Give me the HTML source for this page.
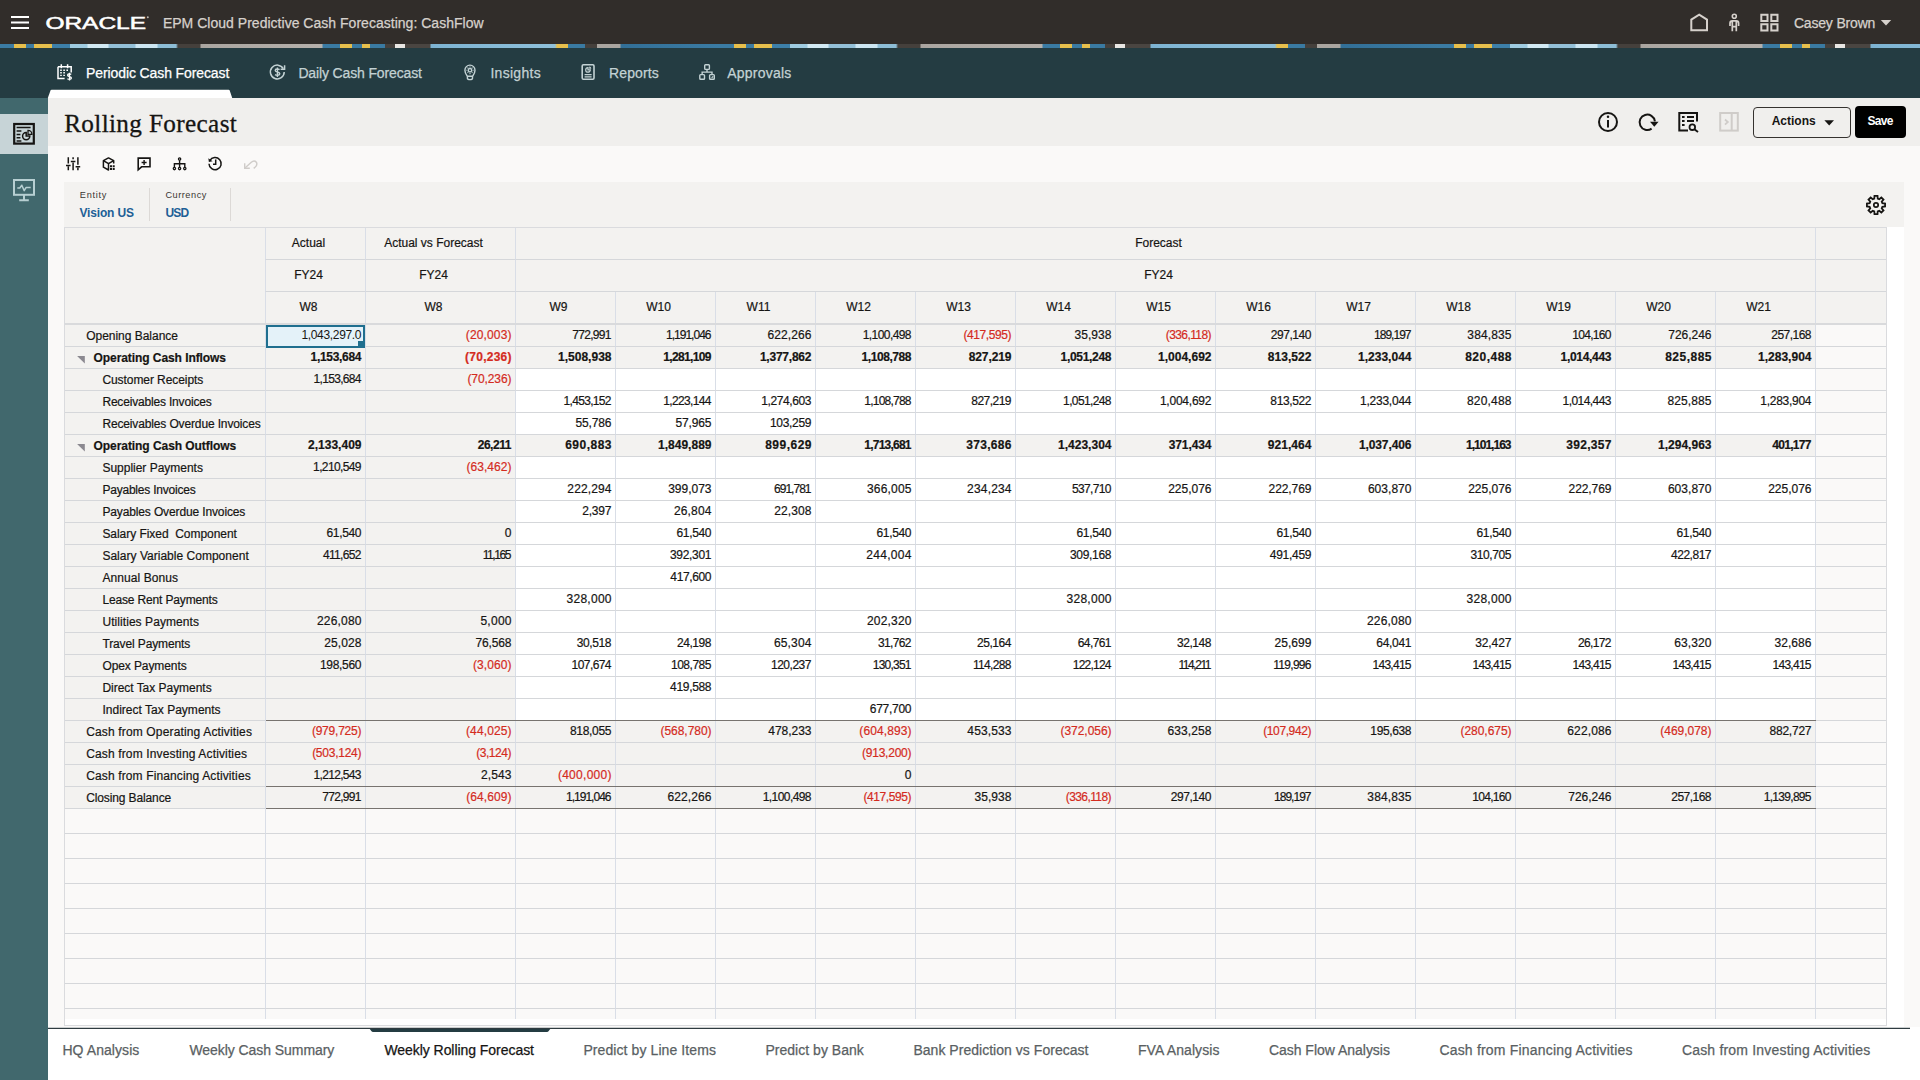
<!DOCTYPE html>
<html lang="en"><head><meta charset="utf-8"><title>Rolling Forecast</title>
<style>
*{box-sizing:border-box;margin:0;padding:0}
html,body{width:1920px;height:1080px;overflow:hidden;background:#faf9f8;font-family:"Liberation Sans", sans-serif;color:#161513}
.abs,.abs>*{position:absolute}
#hdr{left:0;top:0;width:1920px;height:44px;background:#312d2a}
#strip{left:0;top:44px;width:1920px;height:4px;background:repeating-linear-gradient(90deg,#3b7ba3 0,#3b7ba3 14px,#e6be4c 14px,#e6be4c 26px,#3b7ba3 26px,#3b7ba3 34px,#e6be4c 34px,#e6be4c 52px,#3d7fa8 52px,#3d7fa8 70px,#9fcbe0 70px,#9fcbe0 87px,#d2e9f3 88px,#d2e9f3 108px,#93bfd7 109px,#93bfd7 135px,#cde6f2 136px,#cde6f2 157px,#8dbdd6 158px,#8dbdd6 176px,#45403c 178px,#45403c 200px,#aaa5a0 201px,#b5b0ab 322px,#3a7aa2 323px,#3a7aa2 340px,#e6be4c 340px,#e6be4c 352px,#3a7aa2 352px,#3a7aa2 362px,#e6be4c 362px,#e6be4c 370px,#3a7aa2 370px,#3a7aa2 385px,#45403c 385px,#45403c 395px,#e8e6e3 395px,#e8e6e3 405px,#4a4541 405px,#4a4541 430px,#7db3d2 431px,#8fc0da 555px,#e6be4c 557px,#e6be4c 568px,#3a7aa2 568px,#3a7aa2 585px,#45403c 585px,#45403c 597px,#aaa5a0 597px,#aaa5a0 620px,#326f97 621px,#3b7ba3 720px)}
#nav{left:0;top:48px;width:1920px;height:50px;background:#243c42}
#side{left:0;top:98px;width:48px;height:982px;background:#41686d}
#sideact{left:0;top:16px;width:48px;height:40px;background:#c7d4d7}
#title{left:48px;top:98px;width:1872px;height:48px;background:#f0efed}
#pov{left:64px;top:182px;width:1840px;height:45px;background:#f3f2f0}
#gut{left:1887px;top:227px;width:17px;height:800px;background:#fff}
#grid{left:64px;top:227px;width:1823px;height:799px;border:1px solid #dadbde;background:#fff;overflow:hidden}
#btm{left:48px;top:1027px;width:1872px;height:53px;background:#fff}
#btmline{left:48px;top:1027px;width:1862px;height:2px;background:linear-gradient(#2e3b4040 50%,#2e3b40 50%)}
.r{left:0;width:1821px;height:22px}
.r>div{position:absolute;top:0;height:22px;border-right:1px solid #d9dee7;border-bottom:1px solid #d5d7da;font-size:12px;line-height:21px;white-space:pre;overflow:hidden;-webkit-text-stroke:.2px}
.h>div{background:#f3f2f0;text-align:center;padding-right:14px}
.g{background:#f3f2f0}
.e{background:#faf9f8}
.r>div:last-child{border-right:0}
.l{background:#f3f2f0;padding-top:1px}
.n{text-align:right;letter-spacing:var(--l);padding-right:calc(3.5px - var(--l))}
.b{font-weight:700}
.neg{color:#d42b1e}

#tools{left:0;top:0;width:1920px;height:0}
svg{overflow:visible}
</style></head>
<body>
<header class="abs" id="hdr"><svg style="left:8px;top:10px" width="26" height="26" viewBox="8 10 26 26" fill="none" ><path d="M11 17H29M11 22.5H29M11 28H29" stroke="#fff" stroke-width="2"/></svg><svg style="left:44px;top:12px" width="110" height="22" viewBox="44 12 110 22"><text x="45.400" y="28.500" font-family="Liberation Sans, sans-serif" font-size="17.400" fill="#fff" stroke="#fff" stroke-width=".550" textLength="100.600" lengthAdjust="spacingAndGlyphs">ORACLE</text><circle cx="147.800" cy="17.300" r="1" fill="#bbb6b1"/></svg><span style="left:162.9px;top:15.9px;font-size:14px;line-height:1;white-space:pre;letter-spacing:0.02px;color:#d6d1cc;-webkit-text-stroke:.25px;">EPM Cloud Predictive Cash Forecasting: CashFlow</span><svg style="left:1686px;top:10px" width="26" height="26" viewBox="1686 10 26 26" fill="none" ><path d="M1691.3 30.3V19.6L1699.2 14.6L1707 19.6V30.3Z" stroke="#d6d1cc" stroke-width="2" stroke-linejoin="miter"/></svg><svg style="left:1724px;top:10px" width="22" height="26" viewBox="1724 10 22 26" fill="none" ><circle cx="1734.3" cy="16.3" r="2" stroke="#d6d1cc" stroke-width="1.6"/><path d="M1730 26V23.2C1730 21.8 1731 20.8 1732.4 20.8H1736.2C1737.6 20.8 1738.6 21.8 1738.6 23.2V26M1732.3 21V31.3M1736.3 21V31.3M1732.3 26.6H1736.3" stroke="#d6d1cc" stroke-width="1.7"/></svg><svg style="left:1756px;top:10px" width="26" height="26" viewBox="1756 10 26 26" fill="none" ><path d="M1761.3 14.8h6.2v6.2h-6.2zM1771.3 14.8h6.2v6.2h-6.2zM1761.3 24.3h6.2v6.2h-6.2zM1771.3 24.3h6.2v6.2h-6.2z" stroke="#d6d1cc" stroke-width="2"/></svg><span style="left:1793.9px;top:15.9px;font-size:14px;line-height:1;white-space:pre;letter-spacing:-0.18px;color:#d6d1cc;-webkit-text-stroke:.25px;">Casey Brown</span><svg style="left:1878px;top:16px" width="16" height="12" viewBox="1878 16 16 12" fill="none" ><path d="M1880.8 20H1891.2L1886 25.4Z" fill="#d6d1cc"/></svg></header>
<div class="abs" id="strip"></div>
<nav class="abs" id="nav"><svg style="left:47px;top:41px" width="186" height="9" viewBox="0 0 186 9"><path d="M.8 9L3.500 1.500Q3.800 .800 4.600 .800H181.600Q182.400 .800 182.700 1.500L185.200 9Z" fill="#fff"/></svg><svg style="left:55px;top:14px" width="20" height="20" viewBox="55 62 20 20" fill="none" ><path d="M58 66.7H71.2V72.6M58 66.7V78.5H64.6M61.3 64.3V68.2M67.6 64.3V68.2" stroke="#fff" stroke-width="1.5"/><path d="M60.2 70.2h1.6M63.3 70.2h1.6M66.4 70.2h1.6M60.2 72.8h1.6M63.3 72.8h1.6M60.2 75.4h1.6M63.3 75.4h1.6" stroke="#fff" stroke-width="1.4"/><path d="M71.3 74.4C69.9 73.6 67.6 73.7 67.6 75.2C67.6 76.9 71.4 76.2 71.4 78C71.4 79.6 68.8 79.6 67.4 78.7M69.5 72.8V80.4" stroke="#fff" stroke-width="1.3"/></svg><span style="left:86.1px;top:17.9px;font-size:14px;line-height:1;white-space:pre;letter-spacing:-0.11px;color:#fff;-webkit-text-stroke:.25px;">Periodic Cash Forecast</span><svg style="left:266px;top:13px" width="22" height="22" viewBox="266 61 22 22" fill="none" ><path d="M283.3 68.6A6.9 6.9 0 1 0 284.2 72" stroke="#c3d2d4" stroke-width="1.5"/><path d="M284.6 65.2V69.2H280.6" stroke="#c3d2d4" stroke-width="1.5"/><path d="M279.6 69.6C278.4 68.8 275.2 68.7 275.2 70.4C275.2 72.4 279.8 71.6 279.8 73.7C279.8 75.6 276.4 75.5 275 74.6M277.4 67.5V76.9" stroke="#c3d2d4" stroke-width="1.4"/></svg><span style="left:298.4px;top:17.9px;font-size:14px;line-height:1;white-space:pre;letter-spacing:-0.14px;color:#c3d2d4;-webkit-text-stroke:.25px;">Daily Cash Forecast</span><svg style="left:461px;top:13px" width="18" height="22" viewBox="461 61 18 22" fill="none" ><path d="M467.3 76.3C466 74.6 464.9 73 464.9 70.2A5 5 0 0 1 475 70.2C475 73 473.9 74.6 472.6 76.3ZM467.4 76.4V78.2Q467.4 79.6 470 79.6Q472.5 79.6 472.5 78.200V76.4" stroke="#c3d2d4" stroke-width="1.4"/><circle cx="470" cy="70.2" r="1.7" stroke="#c3d2d4" stroke-width="1.3"/><path d="M470 67.6V66.600M470 72.8V74.2M467.4 70.2H466.4M472.6 70.2H473.6M468.2 68.4L467.5 67.7M471.8 68.4L472.5 67.7M468.2 72L467.500 72.700M471.8 72L472.5 72.7" stroke="#c3d2d4" stroke-width="1.1"/></svg><span style="left:490.4px;top:17.9px;font-size:14px;line-height:1;white-space:pre;letter-spacing:0.29px;color:#c3d2d4;-webkit-text-stroke:.25px;">Insights</span><svg style="left:578px;top:13px" width="20" height="22" viewBox="578 61 20 22" fill="none" ><rect x="582.2" y="64.8" width="11.8" height="14.4" rx="1.2" stroke="#c3d2d4" stroke-width="1.6"/><path d="M584.6 74.6H591.600M584.6 76.900H591.6" stroke="#c3d2d4" stroke-width="1.3"/><path d="M588 67.6A2.300 2.300 0 1 0 590.3 69.9H588Z" stroke="#c3d2d4" stroke-width="1.2"/><path d="M589.200 66.6V68.700H591.3A2.100 2.100 0 0 0 589.200 66.600Z" fill="#c3d2d4"/></svg><span style="left:609.1px;top:17.9px;font-size:14px;line-height:1;white-space:pre;letter-spacing:0.09px;color:#c3d2d4;-webkit-text-stroke:.25px;">Reports</span><svg style="left:696px;top:13px" width="22" height="22" viewBox="696 61 22 22" fill="none" ><rect x="704.700" y="64.700" width="4.700" height="4.700" rx=".8" stroke="#c3d2d4" stroke-width="1.4"/><rect x="699.800" y="74.600" width="4.700" height="4.700" rx=".8" stroke="#c3d2d4" stroke-width="1.4"/><rect x="709.600" y="74.600" width="4.700" height="4.700" rx=".8" stroke="#c3d2d4" stroke-width="1.4"/><path d="M707 69.600V72.100M702.150 74.400V72.100H712V74.400" stroke="#c3d2d4" stroke-width="1.4"/><path d="M711.400 77.400H712.800V76" stroke="#c3d2d4" stroke-width="1"/></svg><span style="left:727.2px;top:17.9px;font-size:14px;line-height:1;white-space:pre;letter-spacing:0.24px;color:#c3d2d4;-webkit-text-stroke:.25px;">Approvals</span></nav>
<aside class="abs" id="side"><div id="sideact"></div><svg style="left:10px;top:21px" width="28" height="30" viewBox="10 119 28 30" fill="none" ><rect x="14.2" y="124" width="19.6" height="19.600" stroke="#161513" stroke-width="2.200"/><path d="M16.6 127.600H30.600M16.6 131H21.400M16.6 134.400H20.400M16.6 137.800H20.400M16.600 141H21.400" stroke="#161513" stroke-width="1.500"/><path d="M29.800 136.100A3.600 3.600 0 1 1 26.200 132.500V136.100Z" stroke="#161513" stroke-width="1.500"/><path d="M28 130.400V134.300H31.900A3.900 3.900 0 0 0 28 130.400Z" stroke="#161513" stroke-width="1.300"/></svg><svg style="left:10px;top:77px" width="28" height="30" viewBox="10 175 28 30" fill="none" ><rect x="14" y="180" width="20" height="14.800" stroke="#b7cfd2" stroke-width="2"/><path d="M24 194.800V200.300M19.200 200.300H28.800" stroke="#b7cfd2" stroke-width="2"/><path d="M17.300 188H19.800L21.800 185.200L24.200 190.600L26 187.600H30.700" stroke="#b7cfd2" stroke-width="1.500" stroke-linejoin="round"/></svg></aside>
<div class="abs" id="title"><span style="left:16.2px;top:12.5px;font-size:25.2px;line-height:1;white-space:pre;letter-spacing:0.36px;font-family:'Liberation Serif', serif;-webkit-text-stroke:.3px #161513;">Rolling Forecast</span><svg style="left:1548px;top:12px" width="24" height="24" viewBox="1596 110 24 24" fill="none" ><circle cx="1608" cy="122" r="9" stroke="#161513" stroke-width="2"/><path d="M1608 120V127.400" stroke="#161513" stroke-width="2"/><circle cx="1608" cy="116.700" r="1.250" fill="#161513"/></svg><svg style="left:1587px;top:12px" width="26" height="24" viewBox="1635 110 26 24" fill="none" ><path d="M1654.900 121.300A7.700 7.700 0 1 0 1651.600 128.700" stroke="#161513" stroke-width="2"/><path d="M1650 121.800L1654.300 126.800L1658.600 121.800Z" fill="#161513"/></svg><svg style="left:1628px;top:12px" width="24" height="24" viewBox="1676 110 24 24" fill="none" ><path d="M1697 121.500V113.100H1679.300V130.500H1688" stroke="#161513" stroke-width="2"/><path d="M1682 117H1684.600M1682 121H1684.600M1682 124.900H1684.600" stroke="#161513" stroke-width="2"/><path d="M1687 117H1694M1687 121H1694" stroke="#161513" stroke-width="2"/><circle cx="1692.300" cy="127.200" r="2.800" stroke="#161513" stroke-width="1.800"/><path d="M1694.400 129.300L1698 132" stroke="#161513" stroke-width="2"/></svg><svg style="left:1669px;top:12px" width="24" height="24" viewBox="1717 110 24 24" fill="none" ><rect x="1720.200" y="113" width="17.600" height="17.600" stroke="#cfccc9" stroke-width="2"/><path d="M1731.700 113V130.600" stroke="#cfccc9" stroke-width="2"/><path d="M1725 119.500L1727.800 122L1725 124.600" stroke="#cfccc9" stroke-width="1.800"/></svg><div style="left:1705px;top:9px;width:98px;height:31px;border:1px solid #35322f;border-radius:4px;background:#f0efed"></div><span style="left:1723.7px;top:16.8px;font-size:12px;line-height:1;white-space:pre;letter-spacing:-0.0px;font-weight:700;">Actions</span><svg style="left:1774px;top:19px" width="14" height="12" viewBox="1822 117 14 12" fill="none" ><path d="M1824.400 120.200H1834L1829.200 125.600Z" fill="#161513"/></svg><div style="left:1807px;top:8px;width:51px;height:32px;border-radius:4px;background:#000"></div><span style="left:1819.4px;top:16.8px;font-size:12px;line-height:1;white-space:pre;letter-spacing:-0.68px;font-weight:700;color:#fff;">Save</span></div>
<div class="abs" id="tools"><svg style="left:64px;top:154px" width="18" height="20" viewBox="64 154 18 20" fill="none" ><path d="M68.300 157.300V163.400M68.300 166.300V170.300M73.100 157.300V159.300M73.100 162.600V170.300M77.900 157.300V164.700M77.900 167.600V170.300" stroke="#161513" stroke-width="1.500"/><path d="M66 165.500H70.600M70.800 161.400H75.400M75.600 166.700H80.200" stroke="#161513" stroke-width="1.500"/></svg><svg style="left:100px;top:154px" width="18" height="20" viewBox="100 154 18 20" fill="none" ><path d="M113.700 163.600V160.700L108.500 157.900L103.400 160.700V167.200L108.500 170V163.600L113.700 160.700M103.400 160.700L108.500 163.600" stroke="#161513" stroke-width="1.500" stroke-linejoin="round"/><path d="M110 165.300h2v2h-2zM112.700 165.300h2v2h-2zM110 168h2v2h-2zM112.700 168h2v2h-2z" fill="#161513"/></svg><svg style="left:135px;top:154px" width="18" height="20" viewBox="135 154 18 20" fill="none" ><path d="M138.200 158.100H150V166.800H141.600L138.200 169.800Z" stroke="#161513" stroke-width="1.600"/><path d="M144.100 160V165M141.600 162.500H146.600" stroke="#161513" stroke-width="1.400"/></svg><svg style="left:171px;top:154px" width="18" height="20" viewBox="171 154 18 20" fill="none" ><circle cx="179.600" cy="159.100" r="1.150" stroke="#161513" stroke-width="1.300"/><circle cx="174.400" cy="168.600" r="1.150" stroke="#161513" stroke-width="1.300"/><circle cx="179.600" cy="168.600" r="1.150" stroke="#161513" stroke-width="1.300"/><circle cx="184.800" cy="168.600" r="1.150" stroke="#161513" stroke-width="1.300"/><path d="M179.600 160.500V167.200M174.400 167.200V163.800H184.800V167.200" stroke="#161513" stroke-width="1.400"/></svg><svg style="left:206px;top:154px" width="20" height="20" viewBox="206 154 20 20" fill="none" ><path d="M209.800 160.600A6.100 6.100 0 1 1 209 163.800" stroke="#161513" stroke-width="1.500"/><path d="M208.300 158.200L208.900 162.100L212.600 161.200Z" fill="#161513"/><path d="M215.700 159.600V164.200H213" stroke="#161513" stroke-width="1.500"/></svg><svg style="left:241px;top:154px" width="20" height="20" viewBox="241 154 20 20" fill="none" ><path d="M245 168L251.300 162.300Q254.300 159.700 256.300 162.200Q257.900 164.600 255 167.300L253.700 168.400" stroke="#cfccc9" stroke-width="1.400"/><path d="M244.700 163.300V168.300H249.800" stroke="#cfccc9" stroke-width="1.400"/></svg></div>
<div class="abs" id="pov"><span style="left:15.8px;top:9.1px;font-size:9.2px;line-height:1;white-space:pre;letter-spacing:0.72px;color:#3a3632;">Entity</span><span style="left:15.4px;top:24.8px;font-size:12px;line-height:1;white-space:pre;letter-spacing:-0.16px;font-weight:700;color:#1d5f96;">Vision US</span><span style="left:101.4px;top:9.1px;font-size:9.2px;line-height:1;white-space:pre;letter-spacing:0.53px;color:#3a3632;">Currency</span><span style="left:101.4px;top:24.8px;font-size:12px;line-height:1;white-space:pre;letter-spacing:-0.82px;font-weight:700;color:#1d5f96;">USD</span><div style="left:85px;top:6px;width:1px;height:33px;background:#dcd9d6"></div><div style="left:166px;top:6px;width:1px;height:33px;background:#dcd9d6"></div><svg style="left:1800px;top:11px" width="24" height="24" viewBox="1864 193 24 24" fill="none" ><path d="M1874.26 198.63L1874.49 195.92L1877.51 195.92L1877.74 198.63L1879.27 199.27L1881.35 197.51L1883.49 199.65L1881.73 201.73L1882.37 203.26L1885.08 203.49L1885.08 206.51L1882.37 206.74L1881.73 208.27L1883.49 210.35L1881.35 212.49L1879.27 210.73L1877.74 211.37L1877.51 214.08L1874.49 214.08L1874.26 211.37L1872.73 210.73L1870.65 212.49L1868.51 210.35L1870.27 208.27L1869.63 206.74L1866.92 206.51L1866.92 203.49L1869.63 203.26L1870.27 201.73L1868.51 199.65L1870.65 197.51L1872.73 199.27Z" stroke="#161513" stroke-width="1.800" stroke-linejoin="miter"/><circle cx="1876" cy="205" r="2.200" stroke="#161513" stroke-width="1.700"/></svg></div>
<div class="abs" id="gut"></div>
<main class="abs" id="grid">
<div class="r h" style="top:0px;height:32px"><div style="left:0px;width:201px;height:32px;line-height:30px"></div><div style="left:201px;width:100px;height:32px;line-height:30px">Actual</div><div style="left:301px;width:150px;height:32px;line-height:30px">Actual vs Forecast</div><div style="left:451px;width:1300px;height:32px;line-height:30px">Forecast</div><div style="left:1751px;width:70px;height:32px;line-height:30px"></div></div>
<div class="r h" style="top:32px;height:32px"><div style="left:0px;width:201px;height:32px;line-height:30px"></div><div style="left:201px;width:100px;height:32px;line-height:30px">FY24</div><div style="left:301px;width:150px;height:32px;line-height:30px">FY24</div><div style="left:451px;width:1300px;height:32px;line-height:30px">FY24</div><div style="left:1751px;width:70px;height:32px;line-height:30px"></div></div>
<div class="r h" style="top:64px;height:33px"><div style="left:0px;width:201px;height:33px;line-height:31px"></div><div style="left:201px;width:100px;height:33px;line-height:31px">W8</div><div style="left:301px;width:150px;height:33px;line-height:31px">W8</div><div style="left:451px;width:100px;height:33px;line-height:31px">W9</div><div style="left:551px;width:100px;height:33px;line-height:31px">W10</div><div style="left:651px;width:100px;height:33px;line-height:31px">W11</div><div style="left:751px;width:100px;height:33px;line-height:31px">W12</div><div style="left:851px;width:100px;height:33px;line-height:31px">W13</div><div style="left:951px;width:100px;height:33px;line-height:31px">W14</div><div style="left:1051px;width:100px;height:33px;line-height:31px">W15</div><div style="left:1151px;width:100px;height:33px;line-height:31px">W16</div><div style="left:1251px;width:100px;height:33px;line-height:31px">W17</div><div style="left:1351px;width:100px;height:33px;line-height:31px">W18</div><div style="left:1451px;width:100px;height:33px;line-height:31px">W19</div><div style="left:1551px;width:100px;height:33px;line-height:31px">W20</div><div style="left:1651px;width:100px;height:33px;line-height:31px">W21</div><div style="left:1751px;width:70px;height:33px;line-height:31px"></div></div>
<div style="left:0;top:95px;width:1821px;height:2px;background:#d9dadc"></div>
<div style="left:0;top:0;width:200px;height:95px;background:#f3f2f0"></div>
<div class="r" style="top:97px"><div class="l" style="left:0px;width:201px;padding-left:21.2px;letter-spacing:-0.02px">Opening Balance</div><div class="n g" style="left:201px;width:100px;"></div><div class="n g neg" style="left:301px;width:150px;--l:0.15px">(20,003)</div><div class="n g" style="left:451px;width:100px;--l:-0.68px">772,991</div><div class="n g" style="left:551px;width:100px;--l:-0.98px">1,191,046</div><div class="n g" style="left:651px;width:100px;--l:0.09px">622,266</div><div class="n g" style="left:751px;width:100px;--l:-0.58px">1,100,498</div><div class="n g neg" style="left:851px;width:100px;--l:-0.42px">(417,595)</div><div class="n g" style="left:951px;width:100px;--l:0.07px">35,938</div><div class="n g neg" style="left:1051px;width:100px;--l:-0.59px">(336,118)</div><div class="n g" style="left:1151px;width:100px;--l:-0.43px">297,140</div><div class="n g" style="left:1251px;width:100px;--l:-0.98px">189,197</div><div class="n g" style="left:1351px;width:100px;--l:0.13px">384,835</div><div class="n g" style="left:1451px;width:100px;--l:-0.67px">104,160</div><div class="n g" style="left:1551px;width:100px;--l:-0.03px">726,246</div><div class="n g" style="left:1651px;width:100px;--l:-0.53px">257,168</div><div class="e" style="left:1751px;width:70px;"></div></div>
<div class="r" style="top:119px"><div class="l b" style="left:0px;width:201px;padding-left:28.5px;letter-spacing:-0.07px">Operating Cash Inflows</div><div class="n g b" style="left:201px;width:100px;--l:-0.31px">1,153,684</div><div class="n g b neg" style="left:301px;width:150px;--l:0.25px">(70,236)</div><div class="n g b" style="left:451px;width:100px;--l:0.02px">1,508,938</div><div class="n g b" style="left:551px;width:100px;--l:-0.64px">1,281,109</div><div class="n g b" style="left:651px;width:100px;--l:-0.22px">1,377,862</div><div class="n g b" style="left:751px;width:100px;--l:-0.43px">1,108,788</div><div class="n g b" style="left:851px;width:100px;--l:-0.1px">827,219</div><div class="n g b" style="left:951px;width:100px;--l:-0.31px">1,051,248</div><div class="n g b" style="left:1051px;width:100px;--l:0.02px">1,004,692</div><div class="n g b" style="left:1151px;width:100px;--l:0.06px">813,522</div><div class="n g b" style="left:1251px;width:100px;--l:0.02px">1,233,044</div><div class="n g b" style="left:1351px;width:100px;--l:0.49px">820,488</div><div class="n g b" style="left:1451px;width:100px;--l:-0.31px">1,014,443</div><div class="n g b" style="left:1551px;width:100px;--l:0.49px">825,885</div><div class="n g b" style="left:1651px;width:100px;--l:0.02px">1,283,904</div><div class="e" style="left:1751px;width:70px;"></div></div>
<div class="r" style="top:141px"><div class="l" style="left:0px;width:201px;padding-left:37.4px;letter-spacing:-0.07px">Customer Receipts</div><div class="n g" style="left:201px;width:100px;--l:-0.67px">1,153,684</div><div class="n g neg" style="left:301px;width:150px;--l:-0.09px">(70,236)</div><div class="n" style="left:451px;width:100px;"></div><div class="n" style="left:551px;width:100px;"></div><div class="n" style="left:651px;width:100px;"></div><div class="n" style="left:751px;width:100px;"></div><div class="n" style="left:851px;width:100px;"></div><div class="n" style="left:951px;width:100px;"></div><div class="n" style="left:1051px;width:100px;"></div><div class="n" style="left:1151px;width:100px;"></div><div class="n" style="left:1251px;width:100px;"></div><div class="n" style="left:1351px;width:100px;"></div><div class="n" style="left:1451px;width:100px;"></div><div class="n" style="left:1551px;width:100px;"></div><div class="n" style="left:1651px;width:100px;"></div><div class="e" style="left:1751px;width:70px;"></div></div>
<div class="r" style="top:163px"><div class="l" style="left:0px;width:201px;padding-left:37.4px;letter-spacing:-0.18px">Receivables Invoices</div><div class="n g" style="left:201px;width:100px;"></div><div class="n g" style="left:301px;width:150px;"></div><div class="n" style="left:451px;width:100px;--l:-0.67px">1,453,152</div><div class="n" style="left:551px;width:100px;--l:-0.63px">1,223,144</div><div class="n" style="left:651px;width:100px;--l:-0.39px">1,274,603</div><div class="n" style="left:751px;width:100px;--l:-0.78px">1,108,788</div><div class="n" style="left:851px;width:100px;--l:-0.53px">827,219</div><div class="n" style="left:951px;width:100px;--l:-0.62px">1,051,248</div><div class="n" style="left:1051px;width:100px;--l:-0.22px">1,004,692</div><div class="n" style="left:1151px;width:100px;--l:-0.37px">813,522</div><div class="n" style="left:1251px;width:100px;--l:-0.23px">1,233,044</div><div class="n" style="left:1351px;width:100px;--l:0.19px">820,488</div><div class="n" style="left:1451px;width:100px;--l:-0.55px">1,014,443</div><div class="n" style="left:1551px;width:100px;--l:0.09px">825,885</div><div class="n" style="left:1651px;width:100px;--l:-0.27px">1,283,904</div><div class="e" style="left:1751px;width:70px;"></div></div>
<div class="r" style="top:185px"><div class="l" style="left:0px;width:201px;padding-left:37.4px;letter-spacing:-0.14px">Receivables Overdue Invoices</div><div class="n g" style="left:201px;width:100px;"></div><div class="n g" style="left:301px;width:150px;"></div><div class="n" style="left:451px;width:100px;--l:-0.12px">55,786</div><div class="n" style="left:551px;width:100px;--l:-0.12px">57,965</div><div class="n" style="left:651px;width:100px;--l:-0.31px">103,259</div><div class="n" style="left:751px;width:100px;"></div><div class="n" style="left:851px;width:100px;"></div><div class="n" style="left:951px;width:100px;"></div><div class="n" style="left:1051px;width:100px;"></div><div class="n" style="left:1151px;width:100px;"></div><div class="n" style="left:1251px;width:100px;"></div><div class="n" style="left:1351px;width:100px;"></div><div class="n" style="left:1451px;width:100px;"></div><div class="n" style="left:1551px;width:100px;"></div><div class="n" style="left:1651px;width:100px;"></div><div class="e" style="left:1751px;width:70px;"></div></div>
<div class="r" style="top:207px"><div class="l b" style="left:0px;width:201px;padding-left:28.5px;letter-spacing:-0.06px">Operating Cash Outflows</div><div class="n g b" style="left:201px;width:100px;--l:0.02px">2,133,409</div><div class="n g b" style="left:301px;width:150px;--l:-0.44px">26,211</div><div class="n g b" style="left:451px;width:100px;--l:0.49px">690,883</div><div class="n g b" style="left:551px;width:100px;--l:0.02px">1,849,889</div><div class="n g b" style="left:651px;width:100px;--l:0.49px">899,629</div><div class="n g b" style="left:751px;width:100px;--l:-0.77px">1,713,681</div><div class="n g b" style="left:851px;width:100px;--l:0.33px">373,686</div><div class="n g b" style="left:951px;width:100px;--l:0.02px">1,423,304</div><div class="n g b" style="left:1051px;width:100px;--l:-0.1px">371,434</div><div class="n g b" style="left:1151px;width:100px;--l:0.06px">921,464</div><div class="n g b" style="left:1251px;width:100px;--l:-0.1px">1,037,406</div><div class="n g b" style="left:1351px;width:100px;--l:-0.98px">1,101,163</div><div class="n g b" style="left:1451px;width:100px;--l:0.33px">392,357</div><div class="n g b" style="left:1551px;width:100px;--l:0.02px">1,294,963</div><div class="n g b" style="left:1651px;width:100px;--l:-0.68px">401,177</div><div class="e" style="left:1751px;width:70px;"></div></div>
<div class="r" style="top:229px"><div class="l" style="left:0px;width:201px;padding-left:37.4px;letter-spacing:-0.01px">Supplier Payments</div><div class="n g" style="left:201px;width:100px;--l:-0.62px">1,210,549</div><div class="n g neg" style="left:301px;width:150px;--l:0.04px">(63,462)</div><div class="n" style="left:451px;width:100px;"></div><div class="n" style="left:551px;width:100px;"></div><div class="n" style="left:651px;width:100px;"></div><div class="n" style="left:751px;width:100px;"></div><div class="n" style="left:851px;width:100px;"></div><div class="n" style="left:951px;width:100px;"></div><div class="n" style="left:1051px;width:100px;"></div><div class="n" style="left:1151px;width:100px;"></div><div class="n" style="left:1251px;width:100px;"></div><div class="n" style="left:1351px;width:100px;"></div><div class="n" style="left:1451px;width:100px;"></div><div class="n" style="left:1551px;width:100px;"></div><div class="n" style="left:1651px;width:100px;"></div><div class="e" style="left:1751px;width:70px;"></div></div>
<div class="r" style="top:251px"><div class="l" style="left:0px;width:201px;padding-left:37.4px;letter-spacing:-0.21px">Payables Invoices</div><div class="n g" style="left:201px;width:100px;"></div><div class="n g" style="left:301px;width:150px;"></div><div class="n" style="left:451px;width:100px;--l:0.13px">222,294</div><div class="n" style="left:551px;width:100px;--l:-0.01px">399,073</div><div class="n" style="left:651px;width:100px;--l:-0.98px">691,781</div><div class="n" style="left:751px;width:100px;--l:0.2px">366,005</div><div class="n" style="left:851px;width:100px;--l:0.17px">234,234</div><div class="n" style="left:951px;width:100px;--l:-0.63px">537,710</div><div class="n" style="left:1051px;width:100px;--l:-0.01px">225,076</div><div class="n" style="left:1151px;width:100px;--l:-0.07px">222,769</div><div class="n" style="left:1251px;width:100px;--l:0.04px">603,870</div><div class="n" style="left:1351px;width:100px;--l:-0.01px">225,076</div><div class="n" style="left:1451px;width:100px;--l:-0.07px">222,769</div><div class="n" style="left:1551px;width:100px;--l:0.04px">603,870</div><div class="n" style="left:1651px;width:100px;--l:-0.01px">225,076</div><div class="e" style="left:1751px;width:70px;"></div></div>
<div class="r" style="top:273px"><div class="l" style="left:0px;width:201px;padding-left:37.4px;letter-spacing:-0.13px">Payables Overdue Invoices</div><div class="n g" style="left:201px;width:100px;"></div><div class="n g" style="left:301px;width:150px;"></div><div class="n" style="left:451px;width:100px;--l:-0.19px">2,397</div><div class="n" style="left:551px;width:100px;--l:0.18px">26,804</div><div class="n" style="left:651px;width:100px;--l:0.13px">22,308</div><div class="n" style="left:751px;width:100px;"></div><div class="n" style="left:851px;width:100px;"></div><div class="n" style="left:951px;width:100px;"></div><div class="n" style="left:1051px;width:100px;"></div><div class="n" style="left:1151px;width:100px;"></div><div class="n" style="left:1251px;width:100px;"></div><div class="n" style="left:1351px;width:100px;"></div><div class="n" style="left:1451px;width:100px;"></div><div class="n" style="left:1551px;width:100px;"></div><div class="n" style="left:1651px;width:100px;"></div><div class="e" style="left:1751px;width:70px;"></div></div>
<div class="r" style="top:295px"><div class="l" style="left:0px;width:201px;padding-left:37.4px;letter-spacing:-0.04px">Salary Fixed  Component</div><div class="n g" style="left:201px;width:100px;--l:-0.35px">61,540</div><div class="n g" style="left:301px;width:150px;--l:0px">0</div><div class="n" style="left:451px;width:100px;"></div><div class="n" style="left:551px;width:100px;--l:-0.35px">61,540</div><div class="n" style="left:651px;width:100px;"></div><div class="n" style="left:751px;width:100px;--l:-0.35px">61,540</div><div class="n" style="left:851px;width:100px;"></div><div class="n" style="left:951px;width:100px;--l:-0.35px">61,540</div><div class="n" style="left:1051px;width:100px;"></div><div class="n" style="left:1151px;width:100px;--l:-0.35px">61,540</div><div class="n" style="left:1251px;width:100px;"></div><div class="n" style="left:1351px;width:100px;--l:-0.35px">61,540</div><div class="n" style="left:1451px;width:100px;"></div><div class="n" style="left:1551px;width:100px;--l:-0.35px">61,540</div><div class="n" style="left:1651px;width:100px;"></div><div class="e" style="left:1751px;width:70px;"></div></div>
<div class="r" style="top:317px"><div class="l" style="left:0px;width:201px;padding-left:37.4px;letter-spacing:0.02px">Salary Variable Component</div><div class="n g" style="left:201px;width:100px;--l:-0.66px">411,652</div><div class="n g" style="left:301px;width:150px;--l:-1.39px">11,165</div><div class="n" style="left:451px;width:100px;"></div><div class="n" style="left:551px;width:100px;--l:-0.31px">392,301</div><div class="n" style="left:651px;width:100px;"></div><div class="n" style="left:751px;width:100px;--l:0.33px">244,004</div><div class="n" style="left:851px;width:100px;"></div><div class="n" style="left:951px;width:100px;--l:-0.31px">309,168</div><div class="n" style="left:1051px;width:100px;"></div><div class="n" style="left:1151px;width:100px;--l:-0.28px">491,459</div><div class="n" style="left:1251px;width:100px;"></div><div class="n" style="left:1351px;width:100px;--l:-0.41px">310,705</div><div class="n" style="left:1451px;width:100px;"></div><div class="n" style="left:1551px;width:100px;--l:-0.48px">422,817</div><div class="n" style="left:1651px;width:100px;"></div><div class="e" style="left:1751px;width:70px;"></div></div>
<div class="r" style="top:339px"><div class="l" style="left:0px;width:201px;padding-left:37.4px;letter-spacing:0.08px">Annual Bonus</div><div class="n g" style="left:201px;width:100px;"></div><div class="n g" style="left:301px;width:150px;"></div><div class="n" style="left:451px;width:100px;"></div><div class="n" style="left:551px;width:100px;--l:-0.37px">417,600</div><div class="n" style="left:651px;width:100px;"></div><div class="n" style="left:751px;width:100px;"></div><div class="n" style="left:851px;width:100px;"></div><div class="n" style="left:951px;width:100px;"></div><div class="n" style="left:1051px;width:100px;"></div><div class="n" style="left:1151px;width:100px;"></div><div class="n" style="left:1251px;width:100px;"></div><div class="n" style="left:1351px;width:100px;"></div><div class="n" style="left:1451px;width:100px;"></div><div class="n" style="left:1551px;width:100px;"></div><div class="n" style="left:1651px;width:100px;"></div><div class="e" style="left:1751px;width:70px;"></div></div>
<div class="r" style="top:361px"><div class="l" style="left:0px;width:201px;padding-left:37.4px;letter-spacing:-0.15px">Lease Rent Payments</div><div class="n g" style="left:201px;width:100px;"></div><div class="n g" style="left:301px;width:150px;"></div><div class="n" style="left:451px;width:100px;--l:0.26px">328,000</div><div class="n" style="left:551px;width:100px;"></div><div class="n" style="left:651px;width:100px;"></div><div class="n" style="left:751px;width:100px;"></div><div class="n" style="left:851px;width:100px;"></div><div class="n" style="left:951px;width:100px;--l:0.26px">328,000</div><div class="n" style="left:1051px;width:100px;"></div><div class="n" style="left:1151px;width:100px;"></div><div class="n" style="left:1251px;width:100px;"></div><div class="n" style="left:1351px;width:100px;--l:0.26px">328,000</div><div class="n" style="left:1451px;width:100px;"></div><div class="n" style="left:1551px;width:100px;"></div><div class="n" style="left:1651px;width:100px;"></div><div class="e" style="left:1751px;width:70px;"></div></div>
<div class="r" style="top:383px"><div class="l" style="left:0px;width:201px;padding-left:37.4px;letter-spacing:0.07px">Utilities Payments</div><div class="n g" style="left:201px;width:100px;--l:0.2px">226,080</div><div class="n g" style="left:301px;width:150px;--l:0.27px">5,000</div><div class="n" style="left:451px;width:100px;"></div><div class="n" style="left:551px;width:100px;"></div><div class="n" style="left:651px;width:100px;"></div><div class="n" style="left:751px;width:100px;--l:0.2px">202,320</div><div class="n" style="left:851px;width:100px;"></div><div class="n" style="left:951px;width:100px;"></div><div class="n" style="left:1051px;width:100px;"></div><div class="n" style="left:1151px;width:100px;"></div><div class="n" style="left:1251px;width:100px;--l:0.2px">226,080</div><div class="n" style="left:1351px;width:100px;"></div><div class="n" style="left:1451px;width:100px;"></div><div class="n" style="left:1551px;width:100px;"></div><div class="n" style="left:1651px;width:100px;"></div><div class="e" style="left:1751px;width:70px;"></div></div>
<div class="r" style="top:405px"><div class="l" style="left:0px;width:201px;padding-left:37.4px;letter-spacing:-0.12px">Travel Payments</div><div class="n g" style="left:201px;width:100px;--l:0.13px">25,028</div><div class="n g" style="left:301px;width:150px;--l:-0.12px">76,568</div><div class="n" style="left:451px;width:100px;--l:-0.4px">30,518</div><div class="n" style="left:551px;width:100px;--l:-0.42px">24,198</div><div class="n" style="left:651px;width:100px;--l:0.18px">65,304</div><div class="n" style="left:751px;width:100px;--l:-0.65px">31,762</div><div class="n" style="left:851px;width:100px;--l:-0.42px">25,164</div><div class="n" style="left:951px;width:100px;--l:-0.6px">64,761</div><div class="n" style="left:1051px;width:100px;--l:-0.42px">32,148</div><div class="n" style="left:1151px;width:100px;--l:0.07px">25,699</div><div class="n" style="left:1251px;width:100px;--l:-0.3px">64,041</div><div class="n" style="left:1351px;width:100px;--l:-0.07px">32,427</div><div class="n" style="left:1451px;width:100px;--l:-0.65px">26,172</div><div class="n" style="left:1551px;width:100px;--l:0.13px">63,320</div><div class="n" style="left:1651px;width:100px;--l:0.07px">32,686</div><div class="e" style="left:1751px;width:70px;"></div></div>
<div class="r" style="top:427px"><div class="l" style="left:0px;width:201px;padding-left:37.4px;letter-spacing:-0.09px">Opex Payments</div><div class="n g" style="left:201px;width:100px;--l:-0.31px">198,560</div><div class="n g neg" style="left:301px;width:150px;--l:0.08px">(3,060)</div><div class="n" style="left:451px;width:100px;--l:-0.58px">107,674</div><div class="n" style="left:551px;width:100px;--l:-0.47px">108,785</div><div class="n" style="left:651px;width:100px;--l:-0.47px">120,237</div><div class="n" style="left:751px;width:100px;--l:-0.77px">130,351</div><div class="n" style="left:851px;width:100px;--l:-0.66px">114,288</div><div class="n" style="left:951px;width:100px;--l:-0.78px">122,124</div><div class="n" style="left:1051px;width:100px;--l:-1.44px">114,211</div><div class="n" style="left:1151px;width:100px;--l:-0.7px">119,996</div><div class="n" style="left:1251px;width:100px;--l:-0.74px">143,415</div><div class="n" style="left:1351px;width:100px;--l:-0.74px">143,415</div><div class="n" style="left:1451px;width:100px;--l:-0.74px">143,415</div><div class="n" style="left:1551px;width:100px;--l:-0.74px">143,415</div><div class="n" style="left:1651px;width:100px;--l:-0.74px">143,415</div><div class="e" style="left:1751px;width:70px;"></div></div>
<div class="r" style="top:449px"><div class="l" style="left:0px;width:201px;padding-left:37.4px;letter-spacing:-0.03px">Direct Tax Payments</div><div class="n g" style="left:201px;width:100px;"></div><div class="n g" style="left:301px;width:150px;"></div><div class="n" style="left:451px;width:100px;"></div><div class="n" style="left:551px;width:100px;--l:-0.33px">419,588</div><div class="n" style="left:651px;width:100px;"></div><div class="n" style="left:751px;width:100px;"></div><div class="n" style="left:851px;width:100px;"></div><div class="n" style="left:951px;width:100px;"></div><div class="n" style="left:1051px;width:100px;"></div><div class="n" style="left:1151px;width:100px;"></div><div class="n" style="left:1251px;width:100px;"></div><div class="n" style="left:1351px;width:100px;"></div><div class="n" style="left:1451px;width:100px;"></div><div class="n" style="left:1551px;width:100px;"></div><div class="n" style="left:1651px;width:100px;"></div><div class="e" style="left:1751px;width:70px;"></div></div>
<div class="r" style="top:471px"><div class="l" style="left:0px;width:201px;padding-left:37.4px;letter-spacing:0.02px">Indirect Tax Payments</div><div class="n g" style="left:201px;width:100px;"></div><div class="n g" style="left:301px;width:150px;"></div><div class="n" style="left:451px;width:100px;"></div><div class="n" style="left:551px;width:100px;"></div><div class="n" style="left:651px;width:100px;"></div><div class="n" style="left:751px;width:100px;--l:-0.27px">677,700</div><div class="n" style="left:851px;width:100px;"></div><div class="n" style="left:951px;width:100px;"></div><div class="n" style="left:1051px;width:100px;"></div><div class="n" style="left:1151px;width:100px;"></div><div class="n" style="left:1251px;width:100px;"></div><div class="n" style="left:1351px;width:100px;"></div><div class="n" style="left:1451px;width:100px;"></div><div class="n" style="left:1551px;width:100px;"></div><div class="n" style="left:1651px;width:100px;"></div><div class="e" style="left:1751px;width:70px;"></div></div>
<div class="r" style="top:493px"><div class="l" style="left:0px;width:201px;padding-left:21.2px;letter-spacing:0.15px">Cash from Operating Activities</div><div class="n g neg" style="left:201px;width:100px;--l:-0.22px">(979,725)</div><div class="n g neg" style="left:301px;width:150px;--l:0.12px">(44,025)</div><div class="n g" style="left:451px;width:100px;--l:-0.31px">818,055</div><div class="n g neg" style="left:551px;width:100px;--l:-0.05px">(568,780)</div><div class="n g" style="left:651px;width:100px;--l:-0.03px">478,233</div><div class="n g neg" style="left:751px;width:100px;--l:0.1px">(604,893)</div><div class="n g" style="left:851px;width:100px;--l:0.13px">453,533</div><div class="n g neg" style="left:951px;width:100px;--l:-0.05px">(372,056)</div><div class="n g" style="left:1051px;width:100px;--l:0.09px">633,258</div><div class="n g neg" style="left:1151px;width:100px;--l:-0.38px">(107,942)</div><div class="n g" style="left:1251px;width:100px;--l:-0.37px">195,638</div><div class="n g neg" style="left:1351px;width:100px;--l:-0.05px">(280,675)</div><div class="n g" style="left:1451px;width:100px;--l:0.14px">622,086</div><div class="n g neg" style="left:1551px;width:100px;--l:-0.02px">(469,078)</div><div class="n g" style="left:1651px;width:100px;--l:-0.23px">882,727</div><div class="e" style="left:1751px;width:70px;"></div></div>
<div class="r" style="top:515px"><div class="l" style="left:0px;width:201px;padding-left:21.2px;letter-spacing:0.14px">Cash from Investing Activities</div><div class="n g neg" style="left:201px;width:100px;--l:-0.25px">(503,124)</div><div class="n g neg" style="left:301px;width:150px;--l:-0.45px">(3,124)</div><div class="n g" style="left:451px;width:100px;"></div><div class="n g" style="left:551px;width:100px;"></div><div class="n g" style="left:651px;width:100px;"></div><div class="n g neg" style="left:751px;width:100px;--l:-0.24px">(913,200)</div><div class="n g" style="left:851px;width:100px;"></div><div class="n g" style="left:951px;width:100px;"></div><div class="n g" style="left:1051px;width:100px;"></div><div class="n g" style="left:1151px;width:100px;"></div><div class="n g" style="left:1251px;width:100px;"></div><div class="n g" style="left:1351px;width:100px;"></div><div class="n g" style="left:1451px;width:100px;"></div><div class="n g" style="left:1551px;width:100px;"></div><div class="n g" style="left:1651px;width:100px;"></div><div class="e" style="left:1751px;width:70px;"></div></div>
<div class="r" style="top:537px"><div class="l" style="left:0px;width:201px;padding-left:21.2px;letter-spacing:0.13px">Cash from Financing Activities</div><div class="n g" style="left:201px;width:100px;--l:-0.67px">1,212,543</div><div class="n g" style="left:301px;width:150px;--l:0.09px">2,543</div><div class="n g neg" style="left:451px;width:100px;--l:0.28px">(400,000)</div><div class="n g" style="left:551px;width:100px;"></div><div class="n g" style="left:651px;width:100px;"></div><div class="n g" style="left:751px;width:100px;--l:0px">0</div><div class="n g" style="left:851px;width:100px;"></div><div class="n g" style="left:951px;width:100px;"></div><div class="n g" style="left:1051px;width:100px;"></div><div class="n g" style="left:1151px;width:100px;"></div><div class="n g" style="left:1251px;width:100px;"></div><div class="n g" style="left:1351px;width:100px;"></div><div class="n g" style="left:1451px;width:100px;"></div><div class="n g" style="left:1551px;width:100px;"></div><div class="n g" style="left:1651px;width:100px;"></div><div class="e" style="left:1751px;width:70px;"></div></div>
<div class="r" style="top:559px"><div class="l" style="left:0px;width:201px;padding-left:21.2px;letter-spacing:-0.12px">Closing Balance</div><div class="n g" style="left:201px;width:100px;--l:-0.68px">772,991</div><div class="n g neg" style="left:301px;width:150px;--l:0.09px">(64,609)</div><div class="n g" style="left:451px;width:100px;--l:-0.98px">1,191,046</div><div class="n g" style="left:551px;width:100px;--l:0.09px">622,266</div><div class="n g" style="left:651px;width:100px;--l:-0.58px">1,100,498</div><div class="n g neg" style="left:751px;width:100px;--l:-0.42px">(417,595)</div><div class="n g" style="left:851px;width:100px;--l:0.07px">35,938</div><div class="n g neg" style="left:951px;width:100px;--l:-0.59px">(336,118)</div><div class="n g" style="left:1051px;width:100px;--l:-0.43px">297,140</div><div class="n g" style="left:1151px;width:100px;--l:-0.98px">189,197</div><div class="n g" style="left:1251px;width:100px;--l:0.13px">384,835</div><div class="n g" style="left:1351px;width:100px;--l:-0.67px">104,160</div><div class="n g" style="left:1451px;width:100px;--l:-0.03px">726,246</div><div class="n g" style="left:1551px;width:100px;--l:-0.53px">257,168</div><div class="n g" style="left:1651px;width:100px;--l:-0.7px">1,139,895</div><div class="e" style="left:1751px;width:70px;"></div></div>
<svg style="left:12px;top:127px" width="9" height="9" viewBox="0 0 9 9"><path d="M0.1 1H7.8V8.5Z" fill="#8b8990"/></svg>
<svg style="left:12px;top:215px" width="9" height="9" viewBox="0 0 9 9"><path d="M0.1 1H7.8V8.5Z" fill="#8b8990"/></svg>
<div class="r" style="top:581px;height:25px"><div class="e" style="left:0px;width:201px;height:25px"></div><div class="e" style="left:201px;width:100px;height:25px"></div><div class="e" style="left:301px;width:150px;height:25px"></div><div class="e" style="left:451px;width:100px;height:25px"></div><div class="e" style="left:551px;width:100px;height:25px"></div><div class="e" style="left:651px;width:100px;height:25px"></div><div class="e" style="left:751px;width:100px;height:25px"></div><div class="e" style="left:851px;width:100px;height:25px"></div><div class="e" style="left:951px;width:100px;height:25px"></div><div class="e" style="left:1051px;width:100px;height:25px"></div><div class="e" style="left:1151px;width:100px;height:25px"></div><div class="e" style="left:1251px;width:100px;height:25px"></div><div class="e" style="left:1351px;width:100px;height:25px"></div><div class="e" style="left:1451px;width:100px;height:25px"></div><div class="e" style="left:1551px;width:100px;height:25px"></div><div class="e" style="left:1651px;width:100px;height:25px"></div><div class="e" style="left:1751px;width:70px;height:25px"></div></div>
<div class="r" style="top:606px;height:25px"><div class="e" style="left:0px;width:201px;height:25px"></div><div class="e" style="left:201px;width:100px;height:25px"></div><div class="e" style="left:301px;width:150px;height:25px"></div><div class="e" style="left:451px;width:100px;height:25px"></div><div class="e" style="left:551px;width:100px;height:25px"></div><div class="e" style="left:651px;width:100px;height:25px"></div><div class="e" style="left:751px;width:100px;height:25px"></div><div class="e" style="left:851px;width:100px;height:25px"></div><div class="e" style="left:951px;width:100px;height:25px"></div><div class="e" style="left:1051px;width:100px;height:25px"></div><div class="e" style="left:1151px;width:100px;height:25px"></div><div class="e" style="left:1251px;width:100px;height:25px"></div><div class="e" style="left:1351px;width:100px;height:25px"></div><div class="e" style="left:1451px;width:100px;height:25px"></div><div class="e" style="left:1551px;width:100px;height:25px"></div><div class="e" style="left:1651px;width:100px;height:25px"></div><div class="e" style="left:1751px;width:70px;height:25px"></div></div>
<div class="r" style="top:631px;height:25px"><div class="e" style="left:0px;width:201px;height:25px"></div><div class="e" style="left:201px;width:100px;height:25px"></div><div class="e" style="left:301px;width:150px;height:25px"></div><div class="e" style="left:451px;width:100px;height:25px"></div><div class="e" style="left:551px;width:100px;height:25px"></div><div class="e" style="left:651px;width:100px;height:25px"></div><div class="e" style="left:751px;width:100px;height:25px"></div><div class="e" style="left:851px;width:100px;height:25px"></div><div class="e" style="left:951px;width:100px;height:25px"></div><div class="e" style="left:1051px;width:100px;height:25px"></div><div class="e" style="left:1151px;width:100px;height:25px"></div><div class="e" style="left:1251px;width:100px;height:25px"></div><div class="e" style="left:1351px;width:100px;height:25px"></div><div class="e" style="left:1451px;width:100px;height:25px"></div><div class="e" style="left:1551px;width:100px;height:25px"></div><div class="e" style="left:1651px;width:100px;height:25px"></div><div class="e" style="left:1751px;width:70px;height:25px"></div></div>
<div class="r" style="top:656px;height:25px"><div class="e" style="left:0px;width:201px;height:25px"></div><div class="e" style="left:201px;width:100px;height:25px"></div><div class="e" style="left:301px;width:150px;height:25px"></div><div class="e" style="left:451px;width:100px;height:25px"></div><div class="e" style="left:551px;width:100px;height:25px"></div><div class="e" style="left:651px;width:100px;height:25px"></div><div class="e" style="left:751px;width:100px;height:25px"></div><div class="e" style="left:851px;width:100px;height:25px"></div><div class="e" style="left:951px;width:100px;height:25px"></div><div class="e" style="left:1051px;width:100px;height:25px"></div><div class="e" style="left:1151px;width:100px;height:25px"></div><div class="e" style="left:1251px;width:100px;height:25px"></div><div class="e" style="left:1351px;width:100px;height:25px"></div><div class="e" style="left:1451px;width:100px;height:25px"></div><div class="e" style="left:1551px;width:100px;height:25px"></div><div class="e" style="left:1651px;width:100px;height:25px"></div><div class="e" style="left:1751px;width:70px;height:25px"></div></div>
<div class="r" style="top:681px;height:25px"><div class="e" style="left:0px;width:201px;height:25px"></div><div class="e" style="left:201px;width:100px;height:25px"></div><div class="e" style="left:301px;width:150px;height:25px"></div><div class="e" style="left:451px;width:100px;height:25px"></div><div class="e" style="left:551px;width:100px;height:25px"></div><div class="e" style="left:651px;width:100px;height:25px"></div><div class="e" style="left:751px;width:100px;height:25px"></div><div class="e" style="left:851px;width:100px;height:25px"></div><div class="e" style="left:951px;width:100px;height:25px"></div><div class="e" style="left:1051px;width:100px;height:25px"></div><div class="e" style="left:1151px;width:100px;height:25px"></div><div class="e" style="left:1251px;width:100px;height:25px"></div><div class="e" style="left:1351px;width:100px;height:25px"></div><div class="e" style="left:1451px;width:100px;height:25px"></div><div class="e" style="left:1551px;width:100px;height:25px"></div><div class="e" style="left:1651px;width:100px;height:25px"></div><div class="e" style="left:1751px;width:70px;height:25px"></div></div>
<div class="r" style="top:706px;height:25px"><div class="e" style="left:0px;width:201px;height:25px"></div><div class="e" style="left:201px;width:100px;height:25px"></div><div class="e" style="left:301px;width:150px;height:25px"></div><div class="e" style="left:451px;width:100px;height:25px"></div><div class="e" style="left:551px;width:100px;height:25px"></div><div class="e" style="left:651px;width:100px;height:25px"></div><div class="e" style="left:751px;width:100px;height:25px"></div><div class="e" style="left:851px;width:100px;height:25px"></div><div class="e" style="left:951px;width:100px;height:25px"></div><div class="e" style="left:1051px;width:100px;height:25px"></div><div class="e" style="left:1151px;width:100px;height:25px"></div><div class="e" style="left:1251px;width:100px;height:25px"></div><div class="e" style="left:1351px;width:100px;height:25px"></div><div class="e" style="left:1451px;width:100px;height:25px"></div><div class="e" style="left:1551px;width:100px;height:25px"></div><div class="e" style="left:1651px;width:100px;height:25px"></div><div class="e" style="left:1751px;width:70px;height:25px"></div></div>
<div class="r" style="top:731px;height:25px"><div class="e" style="left:0px;width:201px;height:25px"></div><div class="e" style="left:201px;width:100px;height:25px"></div><div class="e" style="left:301px;width:150px;height:25px"></div><div class="e" style="left:451px;width:100px;height:25px"></div><div class="e" style="left:551px;width:100px;height:25px"></div><div class="e" style="left:651px;width:100px;height:25px"></div><div class="e" style="left:751px;width:100px;height:25px"></div><div class="e" style="left:851px;width:100px;height:25px"></div><div class="e" style="left:951px;width:100px;height:25px"></div><div class="e" style="left:1051px;width:100px;height:25px"></div><div class="e" style="left:1151px;width:100px;height:25px"></div><div class="e" style="left:1251px;width:100px;height:25px"></div><div class="e" style="left:1351px;width:100px;height:25px"></div><div class="e" style="left:1451px;width:100px;height:25px"></div><div class="e" style="left:1551px;width:100px;height:25px"></div><div class="e" style="left:1651px;width:100px;height:25px"></div><div class="e" style="left:1751px;width:70px;height:25px"></div></div>
<div class="r" style="top:756px;height:25px"><div class="e" style="left:0px;width:201px;height:25px"></div><div class="e" style="left:201px;width:100px;height:25px"></div><div class="e" style="left:301px;width:150px;height:25px"></div><div class="e" style="left:451px;width:100px;height:25px"></div><div class="e" style="left:551px;width:100px;height:25px"></div><div class="e" style="left:651px;width:100px;height:25px"></div><div class="e" style="left:751px;width:100px;height:25px"></div><div class="e" style="left:851px;width:100px;height:25px"></div><div class="e" style="left:951px;width:100px;height:25px"></div><div class="e" style="left:1051px;width:100px;height:25px"></div><div class="e" style="left:1151px;width:100px;height:25px"></div><div class="e" style="left:1251px;width:100px;height:25px"></div><div class="e" style="left:1351px;width:100px;height:25px"></div><div class="e" style="left:1451px;width:100px;height:25px"></div><div class="e" style="left:1551px;width:100px;height:25px"></div><div class="e" style="left:1651px;width:100px;height:25px"></div><div class="e" style="left:1751px;width:70px;height:25px"></div></div>
<div class="r" style="top:781px;height:25px"><div class="e" style="left:0px;width:201px;height:25px"></div><div class="e" style="left:201px;width:100px;height:25px"></div><div class="e" style="left:301px;width:150px;height:25px"></div><div class="e" style="left:451px;width:100px;height:25px"></div><div class="e" style="left:551px;width:100px;height:25px"></div><div class="e" style="left:651px;width:100px;height:25px"></div><div class="e" style="left:751px;width:100px;height:25px"></div><div class="e" style="left:851px;width:100px;height:25px"></div><div class="e" style="left:951px;width:100px;height:25px"></div><div class="e" style="left:1051px;width:100px;height:25px"></div><div class="e" style="left:1151px;width:100px;height:25px"></div><div class="e" style="left:1251px;width:100px;height:25px"></div><div class="e" style="left:1351px;width:100px;height:25px"></div><div class="e" style="left:1451px;width:100px;height:25px"></div><div class="e" style="left:1551px;width:100px;height:25px"></div><div class="e" style="left:1651px;width:100px;height:25px"></div><div class="e" style="left:1751px;width:70px;height:25px"></div></div>
<div style="left:0;top:791px;width:1821px;height:7px;background:#fff"></div>
<div style="left:201px;top:492px;width:1550px;height:1px;background:#77736f"></div>
<div style="left:201px;top:558px;width:1550px;height:1px;background:#77736f"></div>
<div style="left:201px;top:580px;width:1550px;height:1px;background:#77736f"></div>
<div style="left:201px;top:97px;width:99px;height:23px;border:2px solid #1f6f8f;background:#e4f2f9;font-size:12px;line-height:17px;text-align:right;padding-right:1.83px;letter-spacing:-0.33px;white-space:pre">1,043,297.0</div>
<div style="left:293px;top:113px;width:7px;height:7px;background:#1f6f8f"></div>
</main>
<footer class="abs" id="btm"><span style="left:14.4px;top:16.4px;font-size:14px;line-height:1;white-space:pre;letter-spacing:0.07px;color:#5a5f63;-webkit-text-stroke:.25px;">HQ Analysis</span><span style="left:141.4px;top:16.4px;font-size:14px;line-height:1;white-space:pre;letter-spacing:-0.06px;color:#5a5f63;-webkit-text-stroke:.25px;">Weekly Cash Summary</span><span style="left:336.4px;top:16.4px;font-size:14px;line-height:1;white-space:pre;letter-spacing:-0.05px;color:#161513;-webkit-text-stroke:.25px;">Weekly Rolling Forecast</span><span style="left:535.4px;top:16.4px;font-size:14px;line-height:1;white-space:pre;letter-spacing:0.09px;color:#5a5f63;-webkit-text-stroke:.25px;">Predict by Line Items</span><span style="left:717.4px;top:16.4px;font-size:14px;line-height:1;white-space:pre;letter-spacing:0.03px;color:#5a5f63;-webkit-text-stroke:.25px;">Predict by Bank</span><span style="left:865.4px;top:16.4px;font-size:14px;line-height:1;white-space:pre;letter-spacing:0.03px;color:#5a5f63;-webkit-text-stroke:.25px;">Bank Prediction vs Forecast</span><span style="left:1089.9px;top:16.4px;font-size:14px;line-height:1;white-space:pre;letter-spacing:0.08px;color:#5a5f63;-webkit-text-stroke:.25px;">FVA Analysis</span><span style="left:1220.9px;top:16.4px;font-size:14px;line-height:1;white-space:pre;letter-spacing:-0.02px;color:#5a5f63;-webkit-text-stroke:.25px;">Cash Flow Analysis</span><span style="left:1391.4px;top:16.4px;font-size:14px;line-height:1;white-space:pre;letter-spacing:0.19px;color:#5a5f63;-webkit-text-stroke:.25px;">Cash from Financing Activities</span><span style="left:1633.9px;top:16.4px;font-size:14px;line-height:1;white-space:pre;letter-spacing:0.19px;color:#5a5f63;-webkit-text-stroke:.25px;">Cash from Investing Activities</span><svg style="left:321px;top:1px" width="182" height="5" viewBox="0 0 182 5"><path d="M0 0H182L179.500 3.200Q179 4 178 4H4Q3 4 2.500 3.200Z" fill="#243c42"/></svg></footer>
<div class="abs" id="btmline"></div>
</body></html>
